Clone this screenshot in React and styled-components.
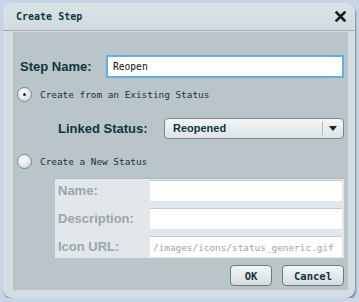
import React, { useState } from "react";
import styled, { createGlobalStyle } from "styled-components";

const GlobalStyle = createGlobalStyle`
  html, body {
    margin: 0;
    padding: 0;
    background: #c7d5e6;
  }
  body {
    font-family: "DejaVu Sans Mono", "Liberation Mono", monospace;
  }
`;

const Dialog = styled.div`
  margin: 3px 0 0 3px;
  width: 352px;
  height: 295px;
  box-sizing: border-box;
  background: #d3dde2;
  border-radius: 9px;
  box-shadow: 1px 2px 2px rgb(60 70 80 / 0.55);
  display: flex;
  flex-direction: column;
  padding: 0 7px 8px 10px;
`;

const TitleBar = styled.div`
  height: 27px;
  display: flex;
  align-items: center;
  justify-content: space-between;
  margin: 0 -7px 0 -10px;
  padding: 0 8px 0 13px;
  border-bottom: 1px solid #a4afb5;
  background: linear-gradient(#d9e2e7, #d1dbe0);
  border-radius: 9px 9px 0 0;
`;

const Title = styled.span`
  font-family: "DejaVu Sans Mono", "Liberation Mono", monospace;
  font-weight: 700;
  font-size: 10px;
  color: #0d3942;
`;

const Close = styled.button`
  border: none;
  background: none;
  padding: 0;
  width: 14px;
  height: 14px;
  display: flex;
  align-items: center;
  justify-content: center;
  cursor: pointer;
`;

const Panel = styled.div`
  flex: 1;
  margin-top: 1px;
  background: #bac5ca;
  padding: 23px 4px 0 7px;
  display: flex;
  flex-direction: column;
`;

const NameRow = styled.div`
  display: flex;
  align-items: center;
  height: 23px;
`;

const BigLabel = styled.label`
  font-family: "Liberation Sans", Arial, sans-serif;
  font-weight: 700;
  font-size: 13px;
  color: #0e3540;
  width: ${(p) => p.$w}px;
  flex-shrink: 0;
  white-space: nowrap;
`;

const TextInput = styled.input`
  flex: 1;
  height: 23px;
  box-sizing: border-box;
  border: 2px solid #64b0e4;
  background: #fff;
  font-family: "DejaVu Sans Mono", monospace;
  font-size: 9.6px;
  color: #111;
  padding: 0 5px;
  outline: none;
`;

const RadioRow = styled.label`
  display: flex;
  align-items: center;
  gap: 8px;
  margin-top: ${(p) => p.$mt}px;
  margin-left: -3px;
  height: 16px;
  font-family: "DejaVu Sans Mono", "Liberation Mono", monospace;
  font-size: 9.4px;
  color: #16343d;
  cursor: pointer;
`;

const RadioDot = styled.span`
  width: 13px;
  height: 13px;
  border-radius: 50%;
  border: 1px solid #7f8a90;
  background: radial-gradient(circle at 40% 35%, #ffffff, #dfe4e6 60%, #c3cacd);
  display: flex;
  align-items: center;
  justify-content: center;
  &::after {
    content: "";
    width: 3px;
    height: 3px;
    border-radius: 50%;
    background: ${(p) => (p.$on ? "#1b2a30" : "transparent")};
  }
`;

const LinkedRow = styled.div`
  display: flex;
  align-items: center;
  margin-top: 15px;
  padding-left: 38px;
  height: 22px;
`;

const Select = styled.div`
  flex: 1;
  height: 21px;
  box-sizing: border-box;
  border: 1px solid #7d878c;
  border-radius: 4px;
  background: linear-gradient(#f4f6f7, #dde3e6);
  display: flex;
  align-items: center;
  font-family: "Liberation Sans", Arial, sans-serif;
  font-weight: 700;
  font-size: 11px;
  color: #0e3540;
`;

const SelectValue = styled.span`
  flex: 1;
  padding-left: 8px;
`;

const SelectArrow = styled.span`
  width: 20px;
  height: 13px;
  border-left: 1px solid #b3bbbf;
  display: flex;
  align-items: center;
  justify-content: center;
`;

const FormTable = styled.div`
  margin: 9px 0 0 35px;
  background: #e1e7ea;
  border-top: 1px solid #aeb8bd;
  padding: 1px 2px 1px 0;
  display: grid;
  grid-template-columns: 95px 1fr;
  row-gap: 7px;
`;

const FieldLabel = styled.span`
  font-family: "Liberation Sans", Arial, sans-serif;
  font-weight: 700;
  font-size: 13px;
  color: #9ba6ab;
  padding-left: 3px;
  display: flex;
  align-items: center;
  height: 21px;
`;

const FieldInput = styled.input`
  height: 21px;
  box-sizing: border-box;
  border: none;
  border-top: 1px solid #c3cbcf;
  background: #fff;
  font-family: "DejaVu Sans Mono", monospace;
  font-size: 9.4px;
  color: #9aa4a9;
  padding: 0 3px;
  outline: none;
  width: 100%;
`;

const Buttons = styled.div`
  display: flex;
  justify-content: flex-end;
  gap: 10px;
  margin-top: 7px;
`;

const Button = styled.button`
  height: 21px;
  width: ${(p) => p.$w}px;
  border: 1px solid #6e787d;
  border-radius: 4px;
  background: linear-gradient(#f3f5f6, #d6dde0);
  font-family: "DejaVu Sans Mono", monospace;
  font-weight: 700;
  font-size: 10.5px;
  color: #0e3540;
  cursor: pointer;
  padding: 0;
`;

function App() {
  const [stepName, setStepName] = useState("Reopen");
  const [mode, setMode] = useState("existing");

  return (
    <>
      <GlobalStyle />
      <Dialog>
        <TitleBar>
          <Title>Create Step</Title>
          <Close aria-label="Close">
            <svg width="11" height="11" viewBox="0 0 11 11">
              <path d="M1.5 1.5 L9.5 9.5 M9.5 1.5 L1.5 9.5" stroke="#1b1b1b" strokeWidth="2.6" strokeLinecap="square" />
            </svg>
          </Close>
        </TitleBar>
        <Panel>
          <NameRow>
            <BigLabel $w={86}>Step Name:</BigLabel>
            <TextInput value={stepName} onChange={(e) => setStepName(e.target.value)} />
          </NameRow>
          <RadioRow $mt={8} onClick={() => setMode("existing")}>
            <RadioDot $on={mode === "existing"} />
            Create from an Existing Status
          </RadioRow>
          <LinkedRow>
            <BigLabel $w={106}>Linked Status:</BigLabel>
            <Select>
              <SelectValue>Reopened</SelectValue>
              <SelectArrow>
                <svg width="8" height="5" viewBox="0 0 8 5">
                  <path d="M0 0 H8 L4 5 Z" fill="#222" />
                </svg>
              </SelectArrow>
            </Select>
          </LinkedRow>
          <RadioRow $mt={14} onClick={() => setMode("new")}>
            <RadioDot $on={mode === "new"} />
            Create a New Status
          </RadioRow>
          <FormTable>
            <FieldLabel>Name:</FieldLabel>
            <FieldInput />
            <FieldLabel>Description:</FieldLabel>
            <FieldInput />
            <FieldLabel>Icon URL:</FieldLabel>
            <FieldInput defaultValue="/images/icons/status_generic.gif" />
          </FormTable>
          <Buttons>
            <Button $w={42}>OK</Button>
            <Button $w={62}>Cancel</Button>
          </Buttons>
        </Panel>
      </Dialog>
    </>
  );
}

export default App;
